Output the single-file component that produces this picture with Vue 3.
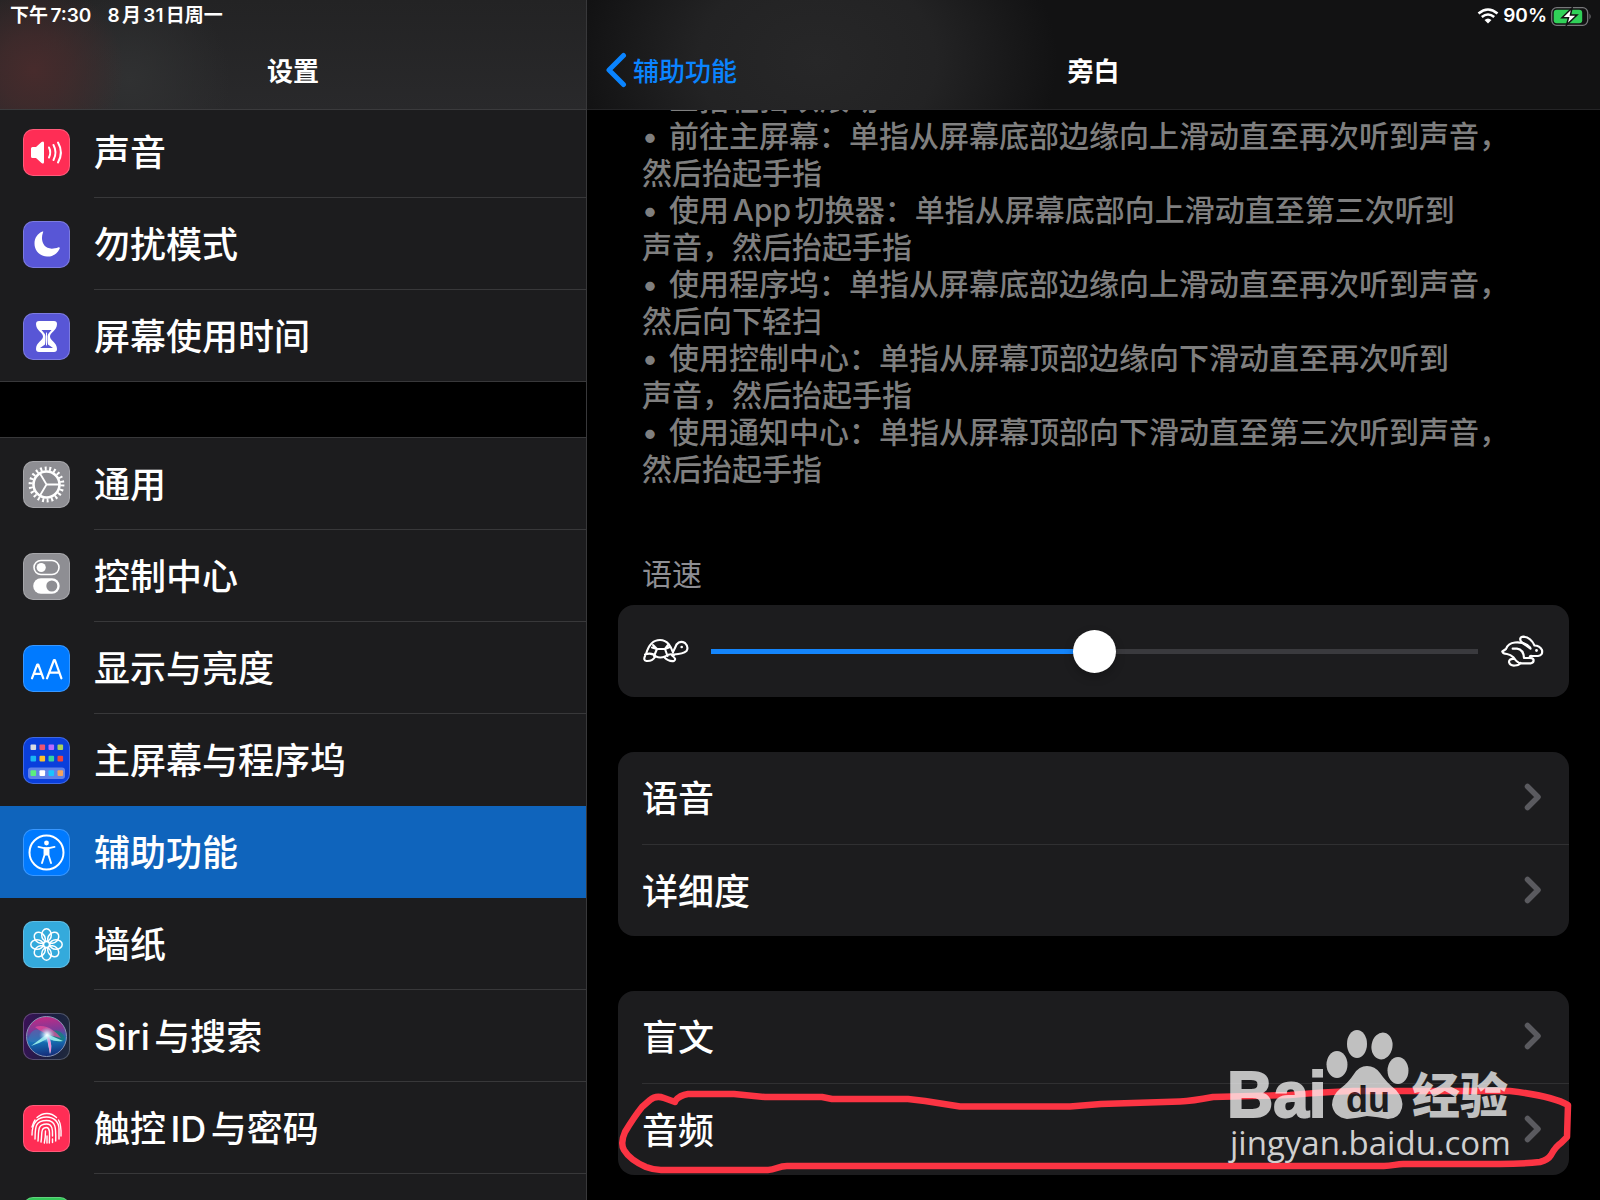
<template>
  <div class="settings">
    <aside class="sidebar">
      <header class="bar sidebar-bar">
        <div class="status">
          <span>下午7:30</span>
          <span>8月31日周一</span>
        </div>
        <div class="nav">
          <h1 class="nav-title">设置</h1>
        </div>
      </header>

      <nav class="menu">
        <div v-for="(group, index) in menu" :key="index" class="menu-group">
          <button
            v-for="item in group"
            :key="item.id"
            type="button"
            class="menu-item"
            :class="{ 'selected': item.id === current }"
            @click="current = item.id"
          >
            <span class="app-icon" :class="item.id">
              <svg v-if="item.id === 'sound'" viewBox="0 0 47 47">
                <path d="M8 19.500q0-1.500 1.500-1.500h3.500l5.500-5q2.500-1.500 2.500 1v19q0 2.500-2.500 1l-5.500-5h-3.500q-1.500 0-1.500-1.500z" fill="#fff" />
                <path d="M26 18.500q2.500 5 0 10M30.500 16q4 7.500 0 15M35 13.500q5.800 10 0 20" class="line" stroke-width="2" />
              </svg>
              <svg v-else-if="item.id === 'dnd'" viewBox="0 0 47 47">
                <path d="M20 11.500C16.500 21 22 31.500 35.600 26.200C37 26 37 27 36.500 28C34 33 29 36 24 35.500C16.500 35 11.500 29.500 11.500 22.500C11.500 17 14.500 12.500 19.500 10.500Q20.800 10 20 11.500z" fill="#fff" />
              </svg>
              <svg v-else-if="item.id === 'time'" viewBox="0 0 47 47">
                <path d="M16 8h15q3 0 3 3c0 7-7 8-7 12.500s7 5.500 7 12.500q0 3-3 3h-15q-3 0-3-3c0-7 7-8 7-12.500s-7-5.500-7-12.500q0-3 3-3z" fill="#fff" />
                <path d="M18.500 17h10c-2 2.500-4 4-4 6.500s0 6 .5 8l5 3.500h-13l5-3.500c.5-2 .5-5.500.5-8s-2-4-4-6.500z" fill="#5856d6" />
                <path d="M23.500 20v12" class="line" stroke-width="1" />
              </svg>
              <svg v-else-if="item.id === 'general'" viewBox="0 0 47 47">
                <circle cx="23.500" cy="23.500" r="15.900" fill="none" stroke="#fff" stroke-width="4" stroke-dasharray="1.950 2.591" />
                <circle cx="23.500" cy="23.500" r="13" fill="none" stroke="#fff" stroke-width="2.600" />
                <path d="M23.500 23.500h12M23.500 23.500l-6.500-11M23.500 23.500l-6.500 11" class="line" stroke-width="1.800" />
              </svg>
              <svg v-else-if="item.id === 'control'" viewBox="0 0 47 47">
                <rect x="11" y="7.500" width="25" height="14" rx="7" class="line" stroke-width="1.600" />
                <circle cx="18.200" cy="14.500" r="4.600" fill="#fff" />
                <rect x="10.200" y="25.200" width="26.500" height="15.500" rx="7.700" fill="#fff" />
                <circle cx="28.800" cy="33" r="5.500" fill="#8e8e93" />
              </svg>
              <svg v-else-if="item.id === 'display'" viewBox="0 0 47 47">
                <path d="M9 33.300L14.300 19.500h.9L20.300 33.300M10.800 28.800h7.800M24 33.300L31 15h.9L38.400 33.300M26.200 27.600h10" class="line" stroke-width="2.200" />
              </svg>
              <svg v-else-if="item.id === 'home'" viewBox="0 0 47 47">
                <rect x="5" y="30.500" width="37" height="11.500" rx="3" fill="#fff" opacity="0.350" />
                <rect
                  v-for="(color, i) in homeColors"
                  :key="i"
                  :x="7.500 + (i % 4) * 9"
                  :y="[7.500, 18.800, 33.300][Math.floor(i / 4)]"
                  width="5.600"
                  height="5.600"
                  rx="1"
                  :fill="color"
                />
              </svg>
              <svg v-else-if="item.id === 'access'" viewBox="0 0 47 47">
                <circle cx="23.500" cy="23.500" r="17" class="line" stroke-width="2" />
                <circle cx="23.500" cy="14" r="2.400" fill="#fff" />
                <path d="M15.500 17.900l5.500 1.200h5l5.500-1.200M21.500 19v7l-2.500 8M25.500 19v7l2.500 8" class="line" stroke-width="1.900" />
                <path d="M21 18.500h5v8h-5z" fill="#fff" />
              </svg>
              <svg v-else-if="item.id === 'wallpaper'" viewBox="0 0 47 47">
                <g class="line" stroke-width="1.500">
                  <ellipse
                    v-for="n in 8"
                    :key="n"
                    cx="23.500"
                    cy="14"
                    rx="4.800"
                    ry="6.200"
                    :transform="`rotate(${n * 45} 23.500 23.500)`"
                  />
                  <circle cx="23.500" cy="23.500" r="3" />
                </g>
              </svg>
              <svg v-else-if="item.id === 'siri'" viewBox="0 0 47 47">
                <defs>
                  <linearGradient id="orb" x1="0.400" y1="0" x2="0.500" y2="1">
                    <stop offset="0" stop-color="#c52a84" />
                    <stop offset="0.350" stop-color="#7c3a98" />
                    <stop offset="0.600" stop-color="#1674b8" />
                    <stop offset="1" stop-color="#142a78" />
                  </linearGradient>
                  <radialGradient id="glow">
                    <stop offset="0" stop-color="#fff" />
                    <stop offset="0.300" stop-color="#d8f4ff" stop-opacity="0.800" />
                    <stop offset="1" stop-color="#70c8f0" stop-opacity="0" />
                  </radialGradient>
                </defs>
                <circle cx="23.500" cy="23.500" r="20" fill="url(#orb)" stroke="#8795b4" stroke-width="1" />
                <path d="M24 22C30 15 38 16 42 25C40 31 32 30 24 22z" fill="#187e7c" opacity="0.800" />
                <path d="M23 23C15 12 8 16 5 27C10 32 17 28 23 23z" fill="#3a78b8" opacity="0.600" />
                <path d="M12 14C22 10 33 18 38 25C30 23 22 22 12 14z" fill="#ee4c9a" opacity="0.700" />
                <path d="M24 21L8 33Q17 30 24 26L27 41Q30 32 26 26Q32 29 40 28z" fill="#8fe6e6" />
                <path d="M24 24L27 41Q30 32 26 24z" fill="#f08cd4" />
                <circle cx="24" cy="22" r="8" fill="url(#glow)" />
              </svg>
              <svg v-else-if="item.id === 'touch'" viewBox="0 0 47 47">
                <g class="line" stroke-width="1.400">
                  <path d="M14 12.500C20 7 28 7.200 33.500 12.500" />
                  <path d="M9 22C10 18.500 10.500 17 12 15M35.500 15C38 19 38.300 24 38 31" />
                  <path d="M9 30C9 16 16 12 23.500 12S36 17 36 24V34" />
                  <path d="M12 34C12.500 24 11 15.500 23.500 15.500C33 15.500 33 23 32.700 36" />
                  <path d="M15 36C16 26 14 19 23.500 19C30 19 29.600 26 29.500 31M29.500 34V37.500" />
                  <path d="M18 37C19.500 29 17 22.500 23.500 22.500C27.500 22.500 26.500 30 26.300 38" />
                  <path d="M21.300 38C22.500 33 22.500 30 22.500 26M24 31V38" />
                </g>
              </svg>
            </span>
            <span class="menu-label">{{ item.label }}</span>
          </button>
        </div>
      </nav>
    </aside>

    <main class="detail">
      <header class="bar detail-bar">
        <div class="status status-right">
          <svg class="wifi" viewBox="0 0 22 16">
            <path d="M1.500 5.500Q11-2.500 20.500 5.500M4.800 9Q11 4 17.200 9" fill="none" stroke="#fff" stroke-width="2.600" />
            <path d="M7.500 12Q11 9 14.500 12L11 15.500z" fill="#fff" />
          </svg>
          <span>90%</span>
          <svg class="battery" viewBox="0 0 41 19">
            <rect x="0.700" y="0.700" width="36" height="17.600" rx="5" fill="none" stroke="#77777a" stroke-width="1.300" />
            <path d="M38.500 6.500q2.300 3 0 6z" fill="#77777a" />
            <rect x="2.700" y="2.700" width="28.500" height="13.600" rx="3" fill="#30d158" />
            <path d="M21 1L11 10.700h6.500L15.500 18l10.500-10h-6.500z" fill="#fff" stroke="#121213" stroke-width="1.500" />
          </svg>
        </div>
        <div class="nav">
          <button type="button" class="back">
            <svg viewBox="0 0 22 36">
              <path d="M18.500 3.500L4 18L18.500 32.500" fill="none" stroke="currentColor" stroke-width="5" stroke-linecap="round" stroke-linejoin="round" />
            </svg>
            辅助功能
          </button>
          <h2 class="nav-title">旁白</h2>
        </div>
      </header>

      <div class="content">
        <ul class="tips">
          <li v-for="(tip, index) in tips" :key="index">
            <span v-for="(line, i) in tip" :key="i" class="tip-line" :class="{ 'first': i === 0 }">{{ line }}</span>
          </li>
        </ul>

        <label class="section-title" for="rate">语速</label>
        <div class="card slider-row">
          <svg class="animal" viewBox="0 0 46 32">
            <g class="line" stroke-width="2.100">
              <path d="M3 19C5 12 9 5 17 5S28 12 30 17.500M2 19.500Q9 17 13 21.500Q17 23.500 22 21.500Q27 18 31 20" />
              <path d="M30 17Q32.500 12 33.500 9.500Q37 5 42 8Q46 12 43.500 16Q40 19 31 19.500" />
              <path d="M9 12.500L14 14H22L27 12M14 14L11 21M22 14L24.500 21M14 14L10 10M22 14L25 10" />
              <path d="M2 21Q0 25.500 3.500 26Q9 26.500 12 22M21 22Q26 27 31 26Q34 24 29 20.500" />
            </g>
            <circle cx="38.700" cy="12" r="1.300" fill="#fff" />
          </svg>
          <input id="rate" v-model="rate" class="slider" type="range" min="0" max="100" :style="{ '--rate': rate + '%' }">
          <svg class="animal hare" viewBox="0 0 44 32">
            <g class="line" stroke-width="2.200">
              <path d="M30 12.500C27 9 21 7 15 7.500C10 8 7 11 6 14L2.300 16.500Q3 19 7 19C11 19.500 12 21 14 23C16 26 18 28.300 21 28.300H31Q34 27.500 33.500 24.500Q32.500 22.500 27.500 23" />
              <path d="M30.500 13.500L22 7.500C19 4.500 20 1.700 23.500 1.700C28 2 32 5 34.500 10.500Q39.500 10.500 42 15Q43 20.500 38 21H32Q29.500 20 30 23H24Q23.500 14.500 17 13.700H12.700" />
              <path d="M14 24Q9 23.500 9 27Q10 31 15 30.500Q19 30.500 20.500 28" />
            </g>
            <circle cx="36.500" cy="15.500" r="1.400" fill="#fff" />
          </svg>
        </div>

        <div v-for="(group, index) in options" :key="index" class="card">
          <button v-for="option in group" :key="option" type="button" class="option">
            <span class="option-label">{{ option }}</span>
            <svg class="chevron" viewBox="0 0 18 28">
              <path d="M3.500 3.500L14 14L3.500 24.500" fill="none" stroke="currentColor" stroke-width="5.500" stroke-linecap="round" stroke-linejoin="round" />
            </svg>
          </button>

          <!-- hand-drawn highlight and site watermark over the last card -->
          <template v-if="index === options.length - 1">
            <svg class="scribble" viewBox="618 991 951 184" preserveAspectRatio="none">
              <path
                d="M675 1102L664 1098Q656 1095 650 1100L642 1107Q634 1117 625 1132Q620 1143 624 1150Q630 1160 646 1167Q654 1170 661 1170H768C776 1170 778 1166 787 1166H1384C1393 1166 1396 1164 1403 1164H1500Q1522 1164 1540 1162Q1548 1160 1551 1155Q1556 1146 1561 1143L1567 1137L1568 1105Q1552 1096 1510 1091H1393L1353 1091Q1325 1092 1290 1095L1213 1097Q1192 1101 1180 1101.500L1101 1104L1070 1106.500H960L925 1101L908 1099H832L822 1097H765L734 1094H688Q680 1095 675 1101"
                fill="none"
                stroke="#fb3443"
                stroke-width="6.500"
                stroke-linecap="round"
                stroke-linejoin="round"
              />
            </svg>
            <svg class="watermark" viewBox="0 0 300 150">
              <g fill="#fff" opacity="0.720">
                <text x="7" y="97" class="wm-bai">Bai</text>
                <ellipse cx="117" cy="44.500" rx="10.500" ry="13.500" />
                <ellipse cx="137" cy="24" rx="10" ry="14" />
                <ellipse cx="162" cy="26" rx="10.500" ry="13.500" transform="rotate(10 162 26)" />
                <ellipse cx="178" cy="50.500" rx="10.500" ry="13.500" />
                <path d="M147 46Q155 46 160 53Q166 62 176 70Q184 79 182 88Q179 99 168 99Q158 97 147 96Q138 98 127 99Q114 97 112 85Q112 75 121 68Q128 63 134 54Q139 46 147 46z" />
                <text x="126" y="92" class="wm-du">du</text>
                <text x="192" y="93" class="wm-cn">经验</text>
              </g>
              <text x="10" y="135" class="wm-url">jingyan.baidu.com</text>
            </svg>
          </template>
        </div>
      </div>
    </main>
  </div>
</template>

<script setup>
import { ref } from 'vue'

const current = ref('access')
const rate = ref(50)

const menu = [
  [
    { id: 'sound', label: '声音' },
    { id: 'dnd', label: '勿扰模式' },
    { id: 'time', label: '屏幕使用时间' }
  ],
  [
    { id: 'general', label: '通用' },
    { id: 'control', label: '控制中心' },
    { id: 'display', label: '显示与亮度' },
    { id: 'home', label: '主屏幕与程序坞' },
    { id: 'access', label: '辅助功能' },
    { id: 'wallpaper', label: '墙纸' },
    { id: 'siri', label: 'Siri与搜索' },
    { id: 'touch', label: '触控ID与密码' },
    { id: 'battery-app', label: '' }
  ]
]

const homeColors = [
  '#d8dbe2', '#ef5470', '#b86cff', '#a6d25c',
  '#19b5f5', '#fdc12e', '#36d3a0', '#f0443c',
  '#5cf07c', '#ffffff', '#19c4ff', '#f5a35c'
]

const tips = [
  ['三指轻扫以滚动'],
  ['前往主屏幕：单指从屏幕底部边缘向上滑动直至再次听到声音，', '然后抬起手指'],
  ['使用App切换器：单指从屏幕底部向上滑动直至第三次听到', '声音，然后抬起手指'],
  ['使用程序坞：单指从屏幕底部边缘向上滑动直至再次听到声音，', '然后向下轻扫'],
  ['使用控制中心：单指从屏幕顶部边缘向下滑动直至再次听到', '声音，然后抬起手指'],
  ['使用通知中心：单指从屏幕顶部向下滑动直至第三次听到声音，', '然后抬起手指']
]

const options = [
  ['语音', '详细度'],
  ['盲文', '音频']
]
</script>

<style>
body {
  margin: 0;
  background: #000;
}
</style>

<style scoped>
.settings {
  display: flex;
  height: 100vh;
  overflow: hidden;
  background: #000;
  color: #fff;
  font-family: Inter, "Noto Sans CJK SC", sans-serif;
  font-weight: 500;
  text-autospace: normal;
}

.settings button {
  border: none;
  background: none;
  color: inherit;
  font: inherit;
  text-align: left;
  cursor: pointer;
}

.line {
  fill: none;
  stroke: #fff;
  stroke-linecap: round;
  stroke-linejoin: round;
}

.sidebar {
  flex: 0 1 587px;
  box-sizing: border-box;
  display: flex;
  flex-direction: column;
  border-right: 1px solid #38383a;
}

.detail {
  flex: 1;
  min-width: 0;
  display: flex;
  flex-direction: column;
}

/* header bars */
.bar {
  flex: none;
  position: relative;
  z-index: 1;
}

.sidebar-bar {
  border-bottom: 1px solid #3b3b3d;
  background:
    radial-gradient(circle at 34px 70px, #472b2c 0, rgba(71, 43, 44, 0.7) 35px, rgba(71, 43, 44, 0) 90px),
    radial-gradient(circle at 130px 80px, #303132 0, rgba(48, 49, 50, 0) 100px),
    linear-gradient(#232324, #29292b);
}

.detail-bar {
  border-bottom: 1px solid #242426;
  background:
    radial-gradient(ellipse 240px 180px at 230px 60px, #272728 0, rgba(39, 39, 40, 0.8) 50%, rgba(39, 39, 40, 0) 100%),
    #121213;
}

.status {
  display: flex;
  align-items: center;
  gap: 16px;
  height: 32px;
  padding: 0 10px;
  font-size: 19px;
  font-weight: 600;
  line-height: 32px;
}

.status-right {
  justify-content: flex-end;
  gap: 4px;
  padding-right: 8px;
}

.wifi {
  width: 22px;
  height: 16px;
}

.battery {
  width: 41px;
  height: 19px;
}

.nav {
  display: grid;
  grid-template-columns: 1fr auto 1fr;
  align-items: center;
  box-sizing: border-box;
  height: 77px;
  padding: 0 18px 2px;
  font-size: 26px;
}

.nav-title {
  grid-column: 2;
  margin: 0;
  font-size: 26px;
  font-weight: 600;
}

.settings .back {
  display: flex;
  align-items: center;
  gap: 6px;
  padding: 0;
  color: #0a84ff;
}

.back svg {
  width: 22px;
  height: 36px;
}

/* left menu, scrolled slightly under the bar */
.menu {
  flex: 1;
  min-height: 0;
  margin-top: -4px;
}

.menu-group {
  background: #1c1c1e;
}

.menu-group:first-child {
  box-shadow: inset 0 -1px #38383a;
}

.menu-group + .menu-group {
  margin-top: 55px;
  border-top: 1px solid #38383a;
}

.settings .menu-item {
  display: flex;
  align-items: center;
  gap: 24px;
  width: 100%;
  height: 92px;
  padding: 0 0 0 23px;
}

.app-icon {
  flex: none;
  box-sizing: border-box;
  width: 47px;
  height: 47px;
  border-radius: 10px;
  box-shadow: inset 0 0 0 1px rgba(255, 255, 255, 0.22);
}

.app-icon svg {
  display: block;
}

.sound,
.touch {
  background: #ff2d55;
}

.dnd,
.time {
  background: #5856d6;
}

.general,
.control {
  background: #8e8e93;
}

.display,
.access {
  background: #007aff;
}

.home {
  background: #0a3fdc;
}

.wallpaper {
  background: #34aadc;
}

.siri {
  background: linear-gradient(100deg, #3c1058, #1a2040 60%, #202a3c);
}

.battery-app {
  background: #34c759;
}

.menu-label {
  flex: 1;
  box-sizing: border-box;
  height: 92px;
  border-bottom: 1px solid #38383a;
  font-size: 36px;
  line-height: 94px;
  white-space: nowrap;
}

.settings .menu-item.selected {
  background: #0f64bc;
}

.selected .menu-label,
.menu-item:last-child .menu-label,
.menu-item:has(+ .selected) .menu-label {
  border-color: transparent;
}

/* right content */
.content {
  flex: 1;
  min-height: 0;
  padding: 0 31px;
}

.tips {
  margin: -29px 0 0;
  padding: 0 24px;
  list-style: none;
  color: #7f7f7f;
  font-size: 30px;
  line-height: 37px;
  white-space: nowrap;
}

.tip-line {
  display: block;
}

.tip-line.first::before {
  content: "•";
  display: inline-block;
  width: 27px;
}

.section-title {
  display: block;
  margin-top: 64px;
  padding: 0 24px;
  color: #8e8e93;
  font-size: 30px;
  font-weight: 400;
  line-height: 44px;
}

.card {
  position: relative;
  margin-bottom: 55px;
  border-radius: 16px;
  background: #1c1c1e;
}

.slider-row {
  display: flex;
  align-items: center;
  gap: 22px;
  height: 92px;
  margin-top: 9px;
  padding: 0 25px;
}

.animal {
  flex: none;
  width: 46px;
  height: 32px;
}

.animal.hare {
  width: 44px;
}

.slider {
  flex: 1;
  min-width: 0;
  height: 43px;
  margin: 0;
  appearance: none;
  background: linear-gradient(to right, #1485fb var(--rate), #3a3a3e var(--rate)) center / 100% 5px no-repeat;
  cursor: pointer;
}

.slider::-webkit-slider-thumb {
  appearance: none;
  width: 43px;
  height: 43px;
  border-radius: 50%;
  background: #fff;
  box-shadow: 0 4px 10px rgba(0, 0, 0, 0.25);
}

.settings .option {
  display: flex;
  align-items: center;
  justify-content: space-between;
  box-sizing: border-box;
  width: calc(100% - 24px);
  height: 92px;
  margin-left: 24px;
  padding: 0 27px 2px 0;
  font-size: 36px;
}

.settings .option:not(:first-child) {
  border-top: 1px solid #303032;
}

.option-label {
  padding-bottom: 2px;
}

.chevron {
  width: 18px;
  height: 28px;
  color: #5a5a5f;
}

.scribble {
  position: absolute;
  inset: 0;
  width: 100%;
  height: 100%;
  overflow: visible;
  pointer-events: none;
}

.watermark {
  position: absolute;
  right: 49px;
  bottom: 5px;
  width: 300px;
  height: 150px;
  overflow: visible;
  pointer-events: none;
}

.wm-bai {
  font: 700 64px "Liberation Sans", sans-serif;
  stroke: #fff;
  stroke-width: 2px;
}

.wm-du {
  fill: #1c1c1e;
  font: 700 36px "Liberation Sans", sans-serif;
}

.wm-cn {
  font: 900 48px "Noto Sans CJK SC", sans-serif;
}

.wm-url {
  fill: #d0d0d0;
  font: 400 33px "Open Sans", sans-serif;
}
</style>
